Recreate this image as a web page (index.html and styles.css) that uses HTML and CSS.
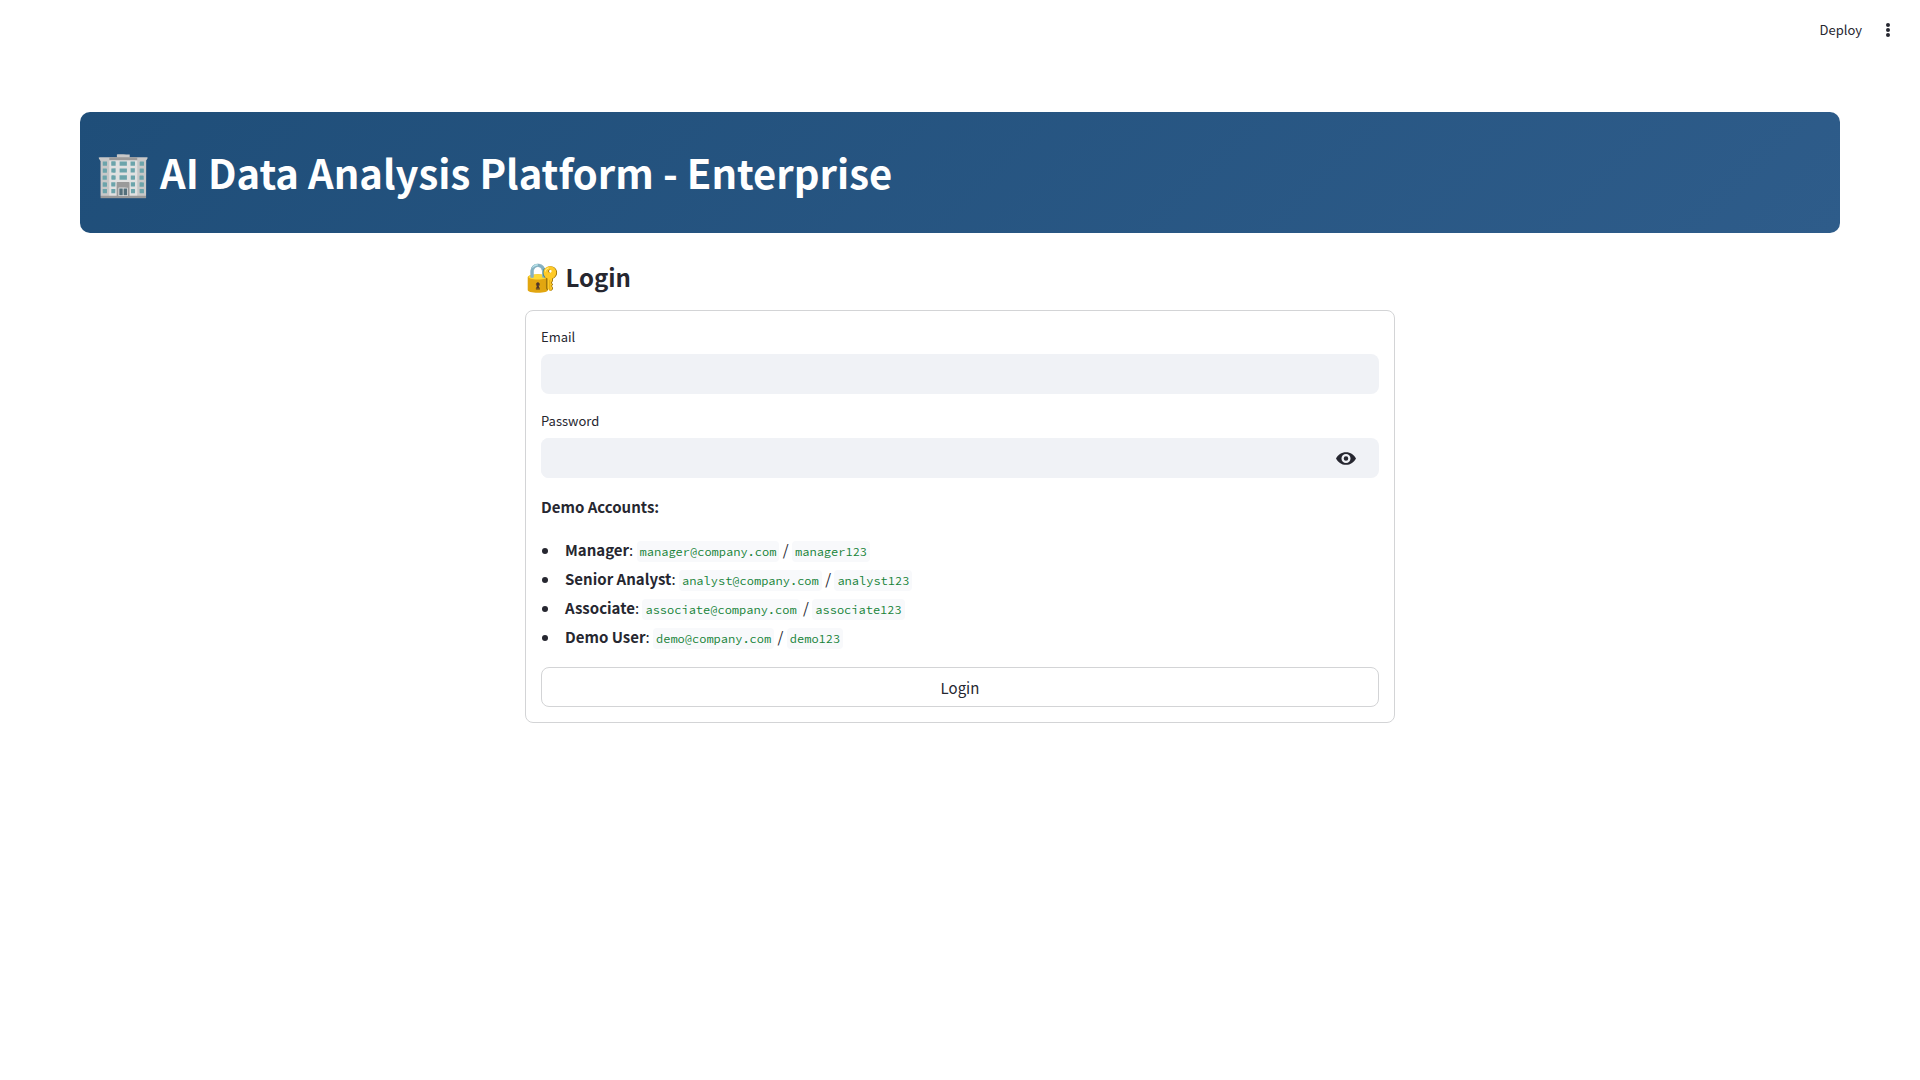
FILE: index.html
```html
<!DOCTYPE html>
<html lang="en">
<head>
<meta charset="utf-8">
<meta name="viewport" content="width=device-width, initial-scale=1">
<title>AI Data Analysis Platform</title>
<link rel="stylesheet" href="styles.css">
</head>
<body>
<header class="toolbar">
  <button class="deploy" type="button">Deploy</button>
  <button class="menu" type="button" aria-label="Main menu">
    <svg viewBox="0 0 20 20" width="20" height="20" fill="currentColor" aria-hidden="true"><circle cx="10" cy="5" r="2"/><circle cx="10" cy="10" r="2"/><circle cx="10" cy="15" r="2"/></svg>
  </button>
</header>
<main class="content">
  <div class="banner"><h1 class="banner-title"><span class="banner-emoji">🏢</span> AI Data Analysis Platform - Enterprise</h1></div>
  <div class="columns">
    <section class="login">
      <h3 class="login-title"><span class="login-emoji">🔐</span> Login</h3>
      <form class="form">
        <div class="field">
          <label class="label" for="email">Email</label>
          <input class="input" id="email" type="text">
        </div>
        <div class="field">
          <label class="label" for="password">Password</label>
          <div class="input-wrap">
            <input class="input" id="password" type="password">
            <button class="reveal" type="button" aria-label="Show password">
              <svg viewBox="0 0 22 14" width="20" height="13" aria-hidden="true"><path fill="currentColor" fill-rule="evenodd" d="M11 0C6 0 2 3 0 7c2 4 6 7 11 7s9-3 11-7c-2-4-6-7-11-7zm0 12a5 5 0 1 1 0-10 5 5 0 0 1 0 10zm0-7.500a2.500 2.500 0 1 0 0 5 2.500 2.500 0 0 0 0-5z"/></svg>
            </button>
          </div>
        </div>
        <div class="demo">
          <p class="demo-title"><strong>Demo Accounts:</strong></p>
          <ul class="accounts">
            <li><strong>Manager</strong>: <code>manager@company.com</code> / <code>manager123</code></li>
            <li><strong>Senior Analyst</strong>: <code>analyst@company.com</code> / <code>analyst123</code></li>
            <li><strong>Associate</strong>: <code>associate@company.com</code> / <code>associate123</code></li>
            <li><strong>Demo User</strong>: <code>demo@company.com</code> / <code>demo123</code></li>
          </ul>
        </div>
        <button class="submit" type="submit">Login</button>
      </form>
    </section>
  </div>
</main>
</body>
</html>
```
FILE: styles.css
```css
* { box-sizing: border-box; }
body {
  margin: 0;
  background: #fff;
  color: #262730;
  font: 400 15px/25px "Source Sans Pro", "Noto Sans CJK SC", "Noto Sans", sans-serif;
}
h1, h3, p, ul { margin: 0; padding: 0; }
button { font: inherit; color: inherit; cursor: pointer; }
strong { font-weight: 700; }

.toolbar {
  display: flex;
  align-items: center;
  justify-content: flex-end;
  gap: 16px;
  height: 60px;
  padding: 0 22px;
}
.deploy, .menu, .reveal {
  display: flex;
  align-items: center;
  padding: 0;
  border: 0;
  background: none;
}
.deploy { font-size: 13px; line-height: 24px; }

.content { padding: 52px 80px 80px; }
.banner {
  padding: 16px;
  border-radius: 10px;
  background: linear-gradient(135deg, #1f4e79, #2e5c8a);
  color: #fff;
}
.banner-title {
  padding: 18px 0;
  font-size: 40px;
  line-height: 53px;
  font-weight: 700;
}
.banner-emoji { font-size: 44px; line-height: 1; }

.columns {
  display: grid;
  grid-template-columns: 1fr 2fr 1fr;
  gap: 10px;
  margin-top: 16px;
}
.login { grid-column: 2; }
.login-title {
  padding: 11px 0 17px;
  font-size: 24px;
  line-height: 33px;
  font-weight: 700;
}
.login-emoji { font-size: 28px; line-height: 1; }

.form {
  display: flex;
  flex-direction: column;
  gap: 16px;
  padding: 15px;
  border: 1px solid #d3d4d6;
  border-radius: 8px;
}
.field { display: flex; flex-direction: column; }
.label { font-size: 13px; line-height: 22px; padding-bottom: 6px; }
.input {
  width: 100%;
  height: 40px;
  padding: 0 12px;
  border: 0;
  border-radius: 8px;
  background: #f0f2f6;
  color: inherit;
  font: inherit;
}
.input-wrap {
  display: flex;
  align-items: center;
  padding-right: 23px;
  border-radius: 8px;
  background: #f0f2f6;
}

.accounts { margin: 16px 0 0 19px; line-height: 29px; }
.accounts li { padding-left: 5px; }
.accounts code {
  padding: 3px;
  border-radius: 4px;
  background: #f8f9fb;
  color: #158237;
  font: 12px/20px "Source Code Pro", "DejaVu Sans Mono", monospace;
}
.submit {
  height: 40px;
  padding: 0 12px;
  border: 1px solid #d3d4d6;
  border-radius: 8px;
  background: #fff;
}
```
